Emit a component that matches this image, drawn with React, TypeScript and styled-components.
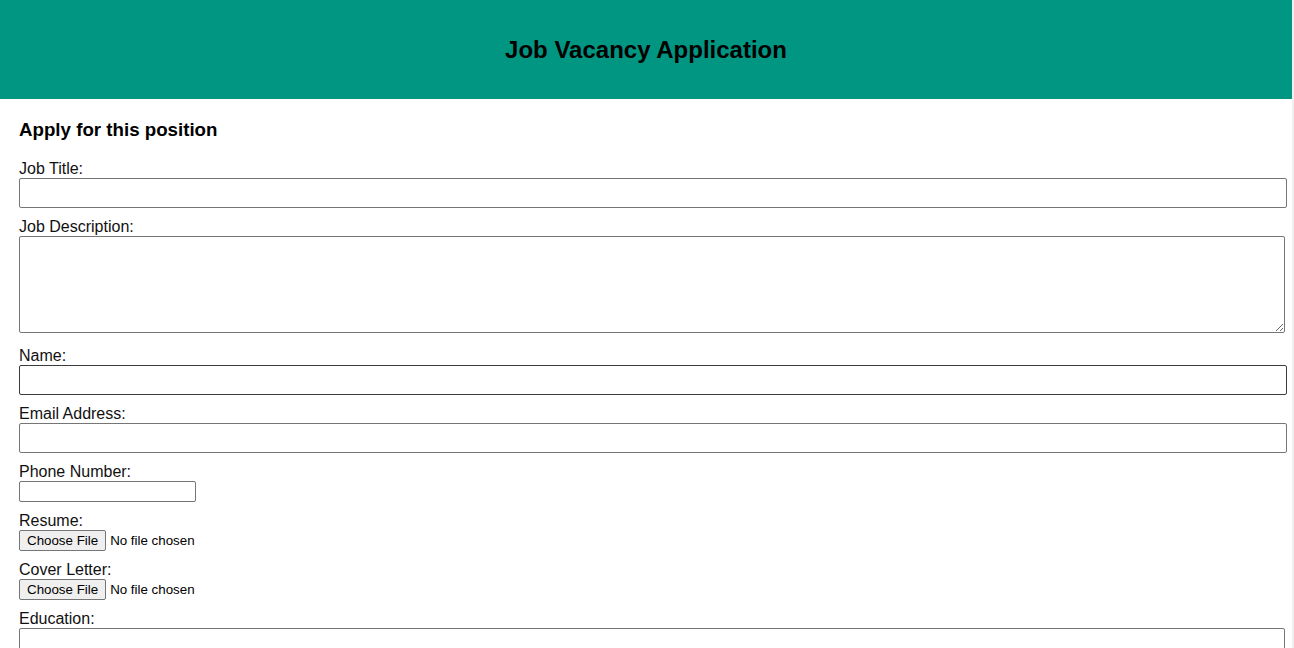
import React from "react";
import styled, { createGlobalStyle } from "styled-components";

const GlobalStyle = createGlobalStyle`
  html, body {
    margin: 0;
    padding: 0;
    background: #ffffff;
  }
  body {
    font-family: "Liberation Sans", Arial, sans-serif;
    color: #000;
  }
  *, *::before, *::after {
    box-sizing: border-box;
  }
`;

const Page = styled.div`
  min-height: 648px;
  border-right: 2px solid #f0f0f0;
  background: #ffffff;
`;

const Header = styled.header`
  height: 99px;
  background: #009682;
  display: flex;
  align-items: center;
  justify-content: center;
`;

const Title = styled.h1`
  margin: 0;
  font-size: 24px;
  font-weight: bold;
  color: #000;
`;

const Form = styled.form`
  padding: 0 5px 0 19px;
`;

const Heading = styled.h3`
  margin: 20px 0 18.72px;
  font-size: 18.72px;
  font-weight: bold;
`;

const Label = styled.label`
  display: block;
  font-size: 16px;
  line-height: normal;
  color: #111;
`;

const TextInput = styled.input<{ $dark?: boolean; $short?: boolean }>`
  display: block;
  width: ${(p) => (p.$short ? "177px" : "100%")};
  height: ${(p) => (p.$short ? "21px" : "30px")};
  margin: 0 0 10px;
  padding: 1px 2px;
  border: 1px solid ${(p) => (p.$dark ? "#3b3b3b" : "#767676")};
  border-radius: 2px;
  background: #fff;
  font-family: "Liberation Sans", Arial, sans-serif;
  font-size: 13.33px;
`;

const TextArea = styled.textarea<{ $h: number }>`
  display: block;
  width: calc(100% - 2px);
  height: ${(p) => p.$h}px;
  margin: 0 0 14px;
  padding: 2px;
  border: 1px solid #767676;
  border-radius: 2px;
  background: #fff;
  font-family: "Liberation Mono", monospace;
  font-size: 13.33px;
`;

const FileInput = styled.input`
  display: block;
  height: 21px;
  margin: 0 0 10px;
  font-family: "Liberation Sans", Arial, sans-serif;
  font-size: 13.33px;
  color: #000;

  &::file-selector-button {
    height: 21px;
    margin: 0 4px 0 0;
    padding: 1px 7px;
    font-family: "Liberation Sans", Arial, sans-serif;
    font-size: 13.33px;
    color: #000;
    background: #efefef;
    border: 1px solid #767676;
    border-radius: 2px;
  }
`;

export default function App() {
  return (
    <>
      <GlobalStyle />
      <Page>
        <Header>
          <Title>Job Vacancy Application</Title>
        </Header>
        <Form onSubmit={(e) => e.preventDefault()}>
          <Heading>Apply for this position</Heading>

          <Label htmlFor="jobTitle">Job Title:</Label>
          <TextInput id="jobTitle" type="text" />

          <Label htmlFor="jobDesc">Job Description:</Label>
          <TextArea id="jobDesc" $h={97} />

          <Label htmlFor="name">Name:</Label>
          <TextInput id="name" type="text" $dark />

          <Label htmlFor="email">Email Address:</Label>
          <TextInput id="email" type="email" />

          <Label htmlFor="phone">Phone Number:</Label>
          <TextInput id="phone" type="tel" $short />

          <Label htmlFor="resume">Resume:</Label>
          <FileInput id="resume" type="file" />

          <Label htmlFor="cover">Cover Letter:</Label>
          <FileInput id="cover" type="file" />

          <Label htmlFor="education">Education:</Label>
          <TextArea id="education" $h={97} />
        </Form>
      </Page>
    </>
  );
}
